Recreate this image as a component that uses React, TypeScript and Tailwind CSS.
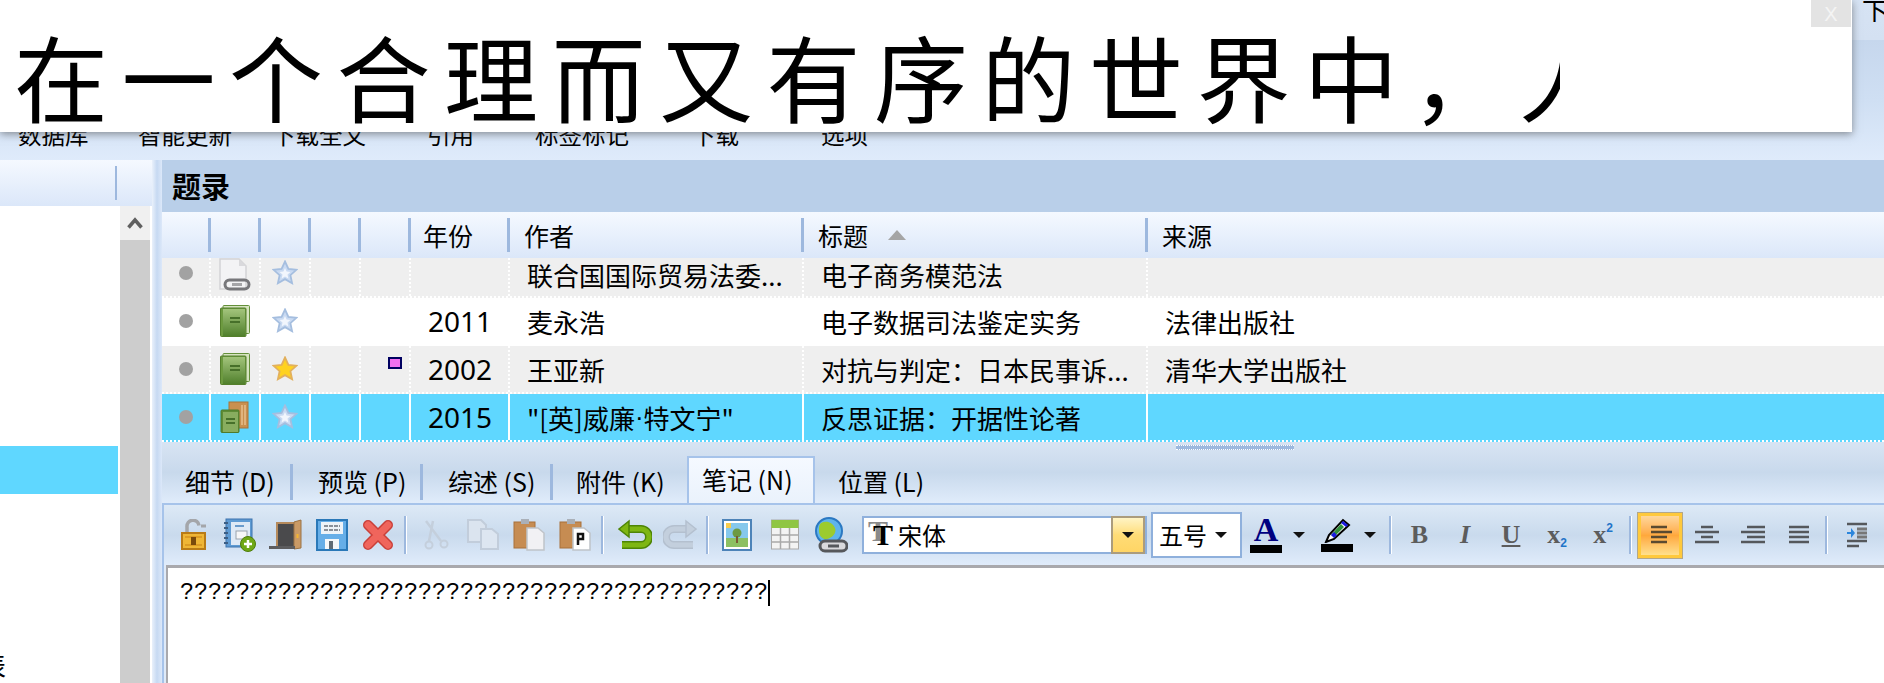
import type { ReactNode } from 'react';

const cjk = "font-['Noto_Sans_CJK_SC','Noto_Sans',sans-serif]";

const navLabels = [
  { text: '数据库', cls: 'w-[120px]' },
  { text: '智能更新', cls: 'w-[134px]' },
  { text: '下载全文', cls: 'w-[155px]' },
  { text: '引用', cls: 'w-[108px]' },
  { text: '标签标记', cls: 'w-[157px]' },
  { text: '下载', cls: 'w-[129px]' },
  { text: '选项', cls: 'w-[100px]' },
];

const Star = ({ gold }: { gold?: boolean }) => (
  <svg width="26" height="26" viewBox="0 0 26 26">
    <path
      d="M13 1.5l3.4 7.4 8 .9-6 5.4 1.7 8-7.1-4.1-7.1 4.1 1.7-8-6-5.4 8-.9z"
      fill={gold ? '#ffd21f' : '#c9daf2'}
      stroke={gold ? '#e2b05c' : '#a5bedf'}
      strokeWidth="1.8"
    />
    {!gold && <path d="M13 8l1.6 3.6 3.9.4-3 2.6.9 3.9-3.4-2-3.4 2 .9-3.9-3-2.6 3.9-.4z" fill="#f2f6fd" />}
  </svg>
);

const Book = () => (
  <svg width="30" height="32" viewBox="0 0 30 32">
    <rect x="3" y="0.5" width="26.5" height="28" rx="1" fill="#d6e4c0" stroke="#64903a" />
    <rect x="0.5" y="3" width="25.5" height="28.5" rx="1" fill="#6d9a40" stroke="#557f2c" />
    <rect x="3" y="4" width="22" height="27" fill="url(#bookg)" />
    <defs>
      <linearGradient id="bookg" x1="0" y1="0" x2="0" y2="1">
        <stop offset="0" stopColor="#a3c47c" />
        <stop offset="1" stopColor="#50802c" />
      </linearGradient>
    </defs>
    <path d="M10 13h10M10 17h10" stroke="#47702a" strokeWidth="2" />
  </svg>
);

const DocLink = () => (
  <svg width="32" height="33" viewBox="0 0 32 33">
    <path d="M1 1h19l7 7v23H1z" fill="#f3f3f5" stroke="#d3d3d6" strokeWidth="1.5" />
    <path d="M20 1v7h7z" fill="#d9d9dc" />
    <rect x="6" y="22" width="24" height="9" rx="4.5" fill="none" stroke="#77777b" strokeWidth="3" />
    <rect x="13" y="25" width="10" height="3" fill="#a5a5a8" />
  </svg>
);

const BookStack = () => (
  <svg width="30" height="32" viewBox="0 0 30 32">
    <rect x="9" y="1" width="19" height="26" fill="#c9904f" stroke="#a8753a" />
    <path d="M22 4v20M25 4v20" stroke="#e7bf8d" strokeWidth="1.5" />
    <rect x="1" y="9" width="18" height="22.5" rx="1" fill="#5f8c36" stroke="#4f7a2b" />
    <rect x="3" y="11" width="15" height="20" fill="#88ad5f" />
    <path d="M6 18h9M6 22h9" stroke="#47702a" strokeWidth="2" />
  </svg>
);

const rows: {
  icon: ReactNode;
  gold?: boolean;
  label?: boolean;
  year: string;
  author: ReactNode;
  title: string;
  source: string;
  cls: string;
  selected?: boolean;
  clipped?: boolean;
}[] = [
  { icon: <DocLink />, year: '', author: '联合国国际贸易法委...', title: '电子商务模范法', source: '', cls: 'h-[40px] bg-[#efefef]', clipped: true },
  { icon: <Book />, year: '2011', author: '麦永浩', title: '电子数据司法鉴定实务', source: '法律出版社', cls: 'h-[48px] bg-white' },
  { icon: <Book />, gold: true, label: true, year: '2002', author: '王亚新', title: '对抗与判定：日本民事诉...', source: '清华大学出版社', cls: 'h-[48px] bg-[#efefef]' },
  {
    icon: <BookStack />,
    year: '2015',
    author: (
      <>
        "[英]威廉<span className="font-['Liberation_Sans',sans-serif]">·</span>特文宁"
      </>
    ),
    title: '反思证据：开据性论著',
    source: '',
    cls: 'h-[48px] bg-[#5fd7ff]',
    selected: true,
  },
];

const Sep = () => <div className="h-[38px] w-[3px] shrink-0 border-r border-white bg-[#9db8de]" />;

const Tool = ({ children, cls = 'w-[46px]' }: { children: ReactNode; cls?: string }) => (
  <div className={`flex h-[40px] shrink-0 items-center justify-center ${cls}`}>{children}</div>
);

const Arrow = () => (
  <svg width="14" height="8" viewBox="0 0 14 8">
    <path d="M1 1h12L7 7z" fill="#111" />
  </svg>
);

const Lock = () => (
  <svg width="26" height="32" viewBox="0 0 26 32">
    <path d="M6 16V8a6 6 0 0 1 12-1.5" fill="none" stroke="#a4a6aa" strokeWidth="3.5" />
    <path d="M20 7h5" stroke="#a4a6aa" strokeWidth="3" />
    <rect x="1" y="14" width="23" height="16" fill="#efb636" stroke="#b97b17" strokeWidth="2" />
    <path d="M4 18h17M4 26h17" stroke="#d7941f" strokeWidth="1.5" />
    <rect x="10" y="18" width="5" height="8" fill="#7a4a0c" />
  </svg>
);

const NoteAdd = () => (
  <svg width="34" height="34" viewBox="0 0 34 34">
    <rect x="3" y="1" width="26" height="28" fill="#5f9bd3" stroke="#3c73ad" />
    <rect x="8" y="4" width="19" height="23" fill="#dfeaf6" />
    <path d="M1 5h4M1 10h4M1 15h4M1 20h4M1 25h4" stroke="#3d5f85" strokeWidth="2" />
    <path d="M12 8h9" stroke="#6b9ccc" strokeWidth="2" />
    <rect x="13" y="13" width="11" height="8" fill="#f7f7f7" stroke="#9aa3ad" />
    <circle cx="25" cy="26" r="7.5" fill="#6fa816" stroke="#4f7d0b" />
    <path d="M25 22v8M21 26h8" stroke="#fff" strokeWidth="2.5" />
  </svg>
);

const Door = () => (
  <svg width="34" height="32" viewBox="0 0 34 32">
    <rect x="7" y="3" width="22" height="26" fill="#b58a5c" />
    <rect x="9" y="5" width="18" height="24" fill="#4a4a4c" />
    <path d="M25 3l7-2v28l-7 1z" fill="#c99a66" stroke="#9b7344" />
    <rect x="27.5" y="15" width="2" height="4" fill="#f3b531" />
    <rect x="0" y="27" width="26" height="3" fill="#5c5c5e" />
  </svg>
);

const Floppy = () => (
  <svg width="32" height="32" viewBox="0 0 32 32">
    <rect x="1" y="1" width="30" height="30" fill="#66aee8" stroke="#2a78b8" strokeWidth="2" />
    <rect x="5" y="3" width="22" height="12" fill="#eef3f8" />
    <path d="M8 7h16M8 11h16" stroke="#8a9099" strokeWidth="2" strokeDasharray="4 1" />
    <rect x="9" y="20" width="14" height="10" fill="#f5f7f9" />
    <rect x="13" y="22" width="4" height="8" fill="#606b75" />
  </svg>
);

const RedX = () => (
  <svg width="30" height="32" viewBox="0 0 30 32">
    <path d="M5 6l20 20M25 6L5 26" stroke="#c9403a" strokeWidth="10" strokeLinecap="round" />
    <path d="M5 6l20 20M25 6L5 26" stroke="#f0655c" strokeWidth="7" strokeLinecap="round" />
  </svg>
);

const Scissors = () => (
  <svg width="26" height="32" viewBox="0 0 26 32">
    <path d="M2 2l15 20M9 2l-4 20" stroke="#c4cfdc" strokeWidth="2.5" fill="none" />
    <circle cx="5" cy="26" r="3.5" fill="none" stroke="#c4cfdc" strokeWidth="2" />
    <circle cx="20" cy="25" r="3.5" fill="none" stroke="#c4cfdc" strokeWidth="2" />
  </svg>
);

const CopyIcon = () => (
  <svg width="32" height="32" viewBox="0 0 32 32">
    <path d="M1 1h13l5 5v17H1z" fill="#dbe4ef" stroke="#c2cddb" strokeWidth="2" />
    <path d="M14 10h11l6 5v15H14z" fill="#dde6f1" stroke="#c2cddb" strokeWidth="2" />
  </svg>
);

const PasteIcon = ({ p }: { p?: boolean }) => (
  <svg width="32" height="32" viewBox="0 0 32 32">
    <rect x="1" y="3" width="21" height="26" fill="#c68c52" stroke="#a8703a" />
    <rect x="8" y="0" width="8" height="5" fill="#aab0b8" />
    <path d="M14 9h11l6 5v17H14z" fill={p ? '#fff' : '#f1f1f4'} stroke="#bfc3c9" strokeWidth="1.5" />
    {p && <path d="M19 26V15h5v5h-5" fill="none" stroke="#111" strokeWidth="2.5" />}
  </svg>
);

const UndoIcon = ({ redo }: { redo?: boolean }) => {
  const main = redo ? '#c3cfdd' : '#7eb612';
  const edge = redo ? '#b4c0cf' : '#4e8505';
  return (
    <svg width="34" height="32" viewBox="0 0 34 32" className={redo ? '-scale-x-100' : ''}>
      <path d="M9 10h14a7 7 0 0 1 0 16H4" fill="none" stroke={edge} strokeWidth="8" />
      <path d="M9 10h14a7 7 0 0 1 0 16H4" fill="none" stroke={main} strokeWidth="5" />
      <path d="M1 10l10-8v16z" fill={main} stroke={edge} strokeWidth="1.5" />
    </svg>
  );
};

const ImageIcon = () => (
  <svg width="30" height="32" viewBox="0 0 30 32">
    <rect x="1" y="1" width="28" height="30" fill="#fff" stroke="#4d83b8" strokeWidth="2" />
    <rect x="4" y="4" width="22" height="15" fill="#86c8ec" />
    <rect x="4" y="19" width="22" height="9" fill="#8cc063" />
    <rect x="4" y="4" width="5" height="5" fill="#f8cc4c" />
    <circle cx="15" cy="14" r="4.5" fill="#6c9a42" />
    <rect x="14" y="17" width="2" height="7" fill="#7a5a34" />
  </svg>
);

const TableIcon = () => (
  <svg width="28" height="32" viewBox="0 0 28 32">
    <rect x="0.5" y="1" width="27" height="29" fill="#f3f3f3" stroke="#a9a9a9" />
    <rect x="0.5" y="1" width="27" height="8" fill="#8fc644" />
    <path d="M0 16h28M0 23h28M9.5 9v21M18.5 9v21" stroke="#a9a9a9" strokeWidth="1.5" />
  </svg>
);

const GlobeIcon = () => (
  <svg width="34" height="36" viewBox="0 0 34 36">
    <circle cx="15" cy="14" r="13" fill="#5fb4ec" stroke="#2b78c2" strokeWidth="2" />
    <path d="M7 6c6-3 12 0 14 5s-3 10-8 11-8-4-8-8 0-6 2-8z" fill="#9ccb2e" />
    <rect x="6" y="24" width="27" height="10" rx="5" fill="#d9d9dc" stroke="#56585c" strokeWidth="3" />
    <rect x="14" y="27.5" width="11" height="3" fill="#56585c" />
  </svg>
);

const FontA = () => (
  <div className="flex w-[32px] flex-col items-center">
    <span className="font-['Liberation_Serif',serif] text-[34px] leading-[26px] font-bold text-[#000080]">A</span>
    <span className="mt-[2px] h-[8px] w-[32px] bg-black" />
  </div>
);

const Pen = () => (
  <div className="flex w-[32px] flex-col items-center">
    <svg width="28" height="25" viewBox="0 0 28 25">
      <path d="M3 24l3-7L20 2l6 5-15 14z" fill="#fff" stroke="#000" strokeWidth="2" />
      <path d="M8 17l10-11 3 3-10 10z" fill="#2f8f3a" />
      <path d="M8 17l3-3 3 3-3 3z" fill="#1a1ae0" />
      <path d="M20 3l5 4-2 2-5-4z" fill="#1a1ae0" />
    </svg>
    <span className="mt-[1px] h-[8px] w-[32px] bg-black" />
  </div>
);

const Glyph = ({ children }: { children: ReactNode }) => (
  <span className="font-['Liberation_Serif',serif] text-[26px] leading-none font-bold text-[#5c5c5c]">{children}</span>
);

const Align = ({ d, color = '#55585c' }: { d: string; color?: string }) => (
  <svg width="24" height="22" viewBox="0 0 24 22">
    <path d={d} stroke={color} strokeWidth="2.4" fill="none" />
  </svg>
);

const Tab = ({ children, cls }: { children: ReactNode; cls: string }) => (
  <div className={`flex h-[36px] shrink-0 items-center ${cls}`}>{children}</div>
);

export default function App() {
  return (
    <div className={`relative h-[683px] w-[1884px] overflow-hidden bg-white text-black ${cjk}`}>
      {/* header, mostly under the popup */}
      <div className="h-[40px] bg-gradient-to-b from-[#d6e3f4] to-[#d4e1f2]">
        <div className="flex h-[22px] justify-end overflow-hidden">
          <span className="-mt-[9px] -mr-[4px] text-[26px] leading-[38px]">下</span>
        </div>
      </div>
      <div className="flex h-[120px] items-start bg-gradient-to-b from-[#c6d7ed] via-[#cfdff3] to-[#dfebfb] pt-[74px] pl-[18px]">
        {navLabels.map((item) => (
          <div key={item.text} className={`text-[23.5px] leading-[40px] whitespace-nowrap ${item.cls}`}>
            {item.text}
          </div>
        ))}
      </div>

      <div className="flex h-[523px]">
        {/* sidebar */}
        <div className="flex w-[152px] shrink-0 flex-col">
          <div className="flex h-[46px] items-center justify-end bg-gradient-to-b from-[#f5f9ff] to-[#dbe7f9] pr-[35px]">
            <div className="h-[34px] w-[2px] bg-[#9db8de]" />
          </div>
          <div className="flex flex-1">
            <div className="w-[120px] overflow-hidden">
              <div className="mt-[240px] h-[48px] w-[118px] bg-[#5fd7ff]" />
              <div className="mt-[155px] -ml-[20px] text-[26px] leading-[32px]">表</div>
            </div>
            <div className="flex w-[30px] flex-col bg-[#cdcdcd]">
              <div className="flex h-[34px] items-center justify-center bg-[#f0f0f0]">
                <svg width="16" height="12" viewBox="0 0 16 12">
                  <path d="M1.5 10.5L8 3l6.5 7.5" fill="none" stroke="#606060" strokeWidth="3.5" />
                </svg>
              </div>
            </div>
          </div>
        </div>
        {/* splitter */}
        <div className="w-[10px] shrink-0 bg-gradient-to-r from-[#eaf1fb] via-[#c6d9f2] to-[#dce8f9]" />

        {/* main */}
        <div className="flex min-w-0 flex-1 flex-col">
          <div className="flex h-[52px] items-center bg-[#b9cfe9] pl-[10px] text-[29px] font-bold">题录</div>
          <div className="flex h-[46px] bg-gradient-to-b from-[#f5f9ff] to-[#dbe7f9] pt-[6px] text-[25px] leading-[34px]">
            {['w-[49px]', 'w-[50px]', 'w-[50px]', 'w-[50px]', 'w-[50px]'].map((w, i) => (
              <div key={i} className={`h-[34px] shrink-0 border-r-[3px] border-[#9db8de] ${w}`} />
            ))}
            <div className="h-[34px] w-[99px] shrink-0 border-r-[3px] border-[#9db8de] pl-[12px]">年份</div>
            <div className="h-[34px] w-[294px] shrink-0 border-r-[3px] border-[#9db8de] pl-[14px]">作者</div>
            <div className="flex h-[34px] w-[344px] shrink-0 items-center border-r-[3px] border-[#9db8de] pl-[14px]">
              标题
              <span className="ml-[20px] h-0 w-0 border-x-[9px] border-b-[10px] border-x-transparent border-b-[#a5a5a5]" />
            </div>
            <div className="pl-[14px]">来源</div>
          </div>

          {rows.map((row) => {
            const dots = row.selected
              ? 'border-r-2 border-white'
              : 'border-r-2 border-dotted border-[#ffffff]';
            return (
              <div
                key={row.cls + row.title}
                className={`flex items-stretch border-b-2 border-dotted border-white text-[26px] whitespace-nowrap ${row.cls}`}
              >
                <div className={`flex w-[49px] shrink-0 items-center justify-center ${dots} ${row.clipped ? 'pb-[8px]' : ''}`}>
                  <span className="h-[14px] w-[14px] rounded-full bg-[#a2a2a2]" />
                </div>
                <div className={`flex w-[50px] shrink-0 items-center justify-center ${dots} ${row.clipped ? 'pb-[6px]' : ''}`}>{row.icon}</div>
                <div className={`flex w-[50px] shrink-0 items-center justify-center ${dots} ${row.clipped ? 'pb-[8px]' : ''}`}>
                  <Star gold={row.gold} />
                </div>
                <div className={`w-[50px] shrink-0 ${dots}`} />
                <div className={`flex w-[50px] shrink-0 items-start justify-end pt-[11px] pr-[7px] ${dots}`}>
                  {row.label && <span className="h-[12px] w-[14px] border-2 border-[#000060] bg-[#f070f0]" />}
                </div>
                <div className={`flex w-[99px] shrink-0 items-center pl-[17px] font-['Noto_Sans',sans-serif] text-[28px] ${dots}`}>{row.year}</div>
                <div className={`flex w-[294px] shrink-0 items-center pl-[17px] ${dots} ${row.clipped ? 'pb-[6px]' : ''}`}>{row.author}</div>
                <div className={`flex w-[344px] shrink-0 items-center pl-[17px] ${dots} ${row.clipped ? 'pb-[6px]' : ''}`}>{row.title}</div>
                <div className="flex items-center pl-[17px]">{row.source}</div>
              </div>
            );
          })}

          {/* tab strip */}
          <div className="relative flex h-[61px] items-end bg-gradient-to-b from-[#d8e4f3] via-[#c8d9ec] to-[#e0ecfb] pb-[3px] text-[25px]">
            <div className="absolute top-[3px] left-[1014px] h-[5px] w-[118px] border-y border-dotted border-white bg-[#9db8de]" />
            <Tab cls="w-[131px] border-r-[3px] border-[#9db8de] pl-[23px]">细节 (D)</Tab>
            <Tab cls="w-[130px] border-r-[3px] border-[#9db8de] pl-[25px]">预览 (P)</Tab>
            <Tab cls="w-[130px] border-r-[3px] border-[#9db8de] pl-[25px]">综述 (S)</Tab>
            <Tab cls="w-[134px] pl-[23px]">附件 (K)</Tab>
            <div className="-mb-[3px] flex h-[47px] w-[128px] shrink-0 items-start border-x-2 border-t-2 border-[#a6c3ea] bg-gradient-to-b from-[#f5f9ff] to-[#eaf2fc] pt-[4px] pl-[13px] leading-[34px]">
              笔记 (N)
            </div>
            <Tab cls="pl-[23px]">位置 (L)</Tab>
          </div>

          {/* note panel */}
          <div className="flex flex-1 flex-col border-t-2 border-l-2 border-[#a6c3ea] bg-[#dfeaf8]">
            <div className="flex h-[60px] items-center bg-gradient-to-b from-[#dde9f6] via-[#c9daed] to-[#e0ecfb] pl-[7px]">
              <Tool><Lock /></Tool>
              <Tool><NoteAdd /></Tool>
              <Tool><Door /></Tool>
              <Tool><Floppy /></Tool>
              <Tool><RedX /></Tool>
              <div className="mr-[7px] ml-[3px]"><Sep /></div>
              <Tool><Scissors /></Tool>
              <Tool><CopyIcon /></Tool>
              <Tool><PasteIcon /></Tool>
              <Tool><PasteIcon p /></Tool>
              <div className="mr-[8px] ml-[3px]"><Sep /></div>
              <Tool cls="w-[45px]"><UndoIcon /></Tool>
              <Tool><UndoIcon redo /></Tool>
              <div className="mr-[5px] ml-[3px]"><Sep /></div>
              <Tool><ImageIcon /></Tool>
              <div className="ml-[2px]"><Tool><TableIcon /></Tool></div>
              <Tool><GlobeIcon /></Tool>

              <div className="ml-[8px] flex h-[38px] w-[285px] shrink-0 items-center border-2 border-[#8fb0dc] bg-white">
                <div className="flex flex-1 items-center pl-[4px] text-[24px]">
                  <span className="relative h-[30px] w-[30px] font-['Liberation_Serif',serif] text-[30px] leading-[30px] font-bold">
                    <span className="absolute -top-[4px] left-0 text-[#8a8a8a]">T</span>
                    <span className="absolute top-0 left-[5px]">T</span>
                  </span>
                  <span>宋体</span>
                </div>
                <div className="flex h-[38px] w-[34px] shrink-0 items-center justify-center border-2 border-[#ab9c7d] bg-gradient-to-b from-[#fff4c4] via-[#ffdc76] to-[#ffd565]">
                  <Arrow />
                </div>
              </div>
              <div className="ml-[4px] flex h-[46px] w-[91px] shrink-0 items-center justify-between border-2 border-[#8fb0dc] bg-white pr-[12px] pl-[6px] text-[24px]">
                五号
                <Arrow />
              </div>
              <div className="ml-[8px]"><FontA /></div>
              <Tool cls="w-[34px]"><Arrow /></Tool>
              <div className="ml-[5px]"><Pen /></div>
              <Tool cls="w-[34px]"><Arrow /></Tool>
              <div className="ml-[2px]"><Sep /></div>
              <div className="ml-[5px]" />
              <Tool cls="w-[45px]"><Glyph>B</Glyph></Tool>
              <Tool cls="w-[46px]"><Glyph><i>I</i></Glyph></Tool>
              <Tool cls="w-[46px]"><Glyph><u>U</u></Glyph></Tool>
              <Tool cls="w-[46px]">
                <Glyph>x</Glyph>
                <span className="mt-[16px] font-['Liberation_Sans',sans-serif] text-[12px] leading-none font-bold text-[#1f74c8]">2</span>
              </Tool>
              <Tool cls="w-[46px]">
                <Glyph>x</Glyph>
                <span className="-mt-[14px] font-['Liberation_Sans',sans-serif] text-[12px] leading-none font-bold text-[#1f74c8]">2</span>
              </Tool>
              <div className="ml-[3px]"><Sep /></div>
              <div className="ml-[6px] flex h-[45px] w-[44px] shrink-0 items-center justify-center border-[3px] border-[#ffc93c] bg-gradient-to-b from-[#ffd79a] via-[#ffa83c] to-[#ffe08c] outline-1 outline-[#b3a788]">
                <Align d="M3 3h16M3 8h22M3 13h16M3 18h16" color="#5a4a30" />
              </div>
              <div className="ml-[2px]" />
              <Tool><Align d="M6 3h12M0 8h24M6 13h12M0 18h24" /></Tool>
              <Tool><Align d="M6 3h18M0 8h24M6 13h18M0 18h24" /></Tool>
              <Tool><Align d="M2 3h20M2 8h20M2 13h20M2 18h20" /></Tool>
              <div className="ml-[3px]"><Sep /></div>
              <div className="ml-[7px]" />
              <Tool>
                <svg width="22" height="26" viewBox="0 0 22 26">
                  <path d="M0 2h20M0 24h12M0 19h20" stroke="#55585c" strokeWidth="2.4" />
                  <path d="M10 7h10M10 11h10M10 15h10" stroke="#777" strokeWidth="3" />
                  <path d="M0 10h4V6l4 5-4 5v-4H0z" fill="#2b86dd" />
                </svg>
              </Tool>
            </div>
            <div className="ml-[2px] flex-1 border-t-[3px] border-l-2 border-[#a9a9ad] bg-white pt-[12px] pl-[12px]">
              <div className="flex items-center font-['Liberation_Mono',monospace] text-[23.33px] leading-[26px]">
                <span>{'?'.repeat(42)}</span>
                <span className="h-[26px] w-[2px] bg-black" />
              </div>
            </div>
          </div>
        </div>
      </div>

      {/* subtitle popup floating above the app */}
      <div className="absolute top-0 left-0 h-[132px] w-[1852px] bg-white shadow-[0_2px_8px_rgba(60,60,60,0.55)]">
        <div className="absolute top-0 right-[1px] flex h-[27px] w-[40px] items-center justify-center bg-[#e3e3e3] font-['Liberation_Sans',sans-serif] text-[20px] text-[#f4f4f4]">
          X
        </div>
        <div className="h-[132px] w-[1560px] overflow-hidden pl-[14px] text-[94px] leading-[150px] tracking-[13.5px] whitespace-nowrap">
          在一个合理而又有序的世界中，人
        </div>
      </div>
    </div>
  );
}
